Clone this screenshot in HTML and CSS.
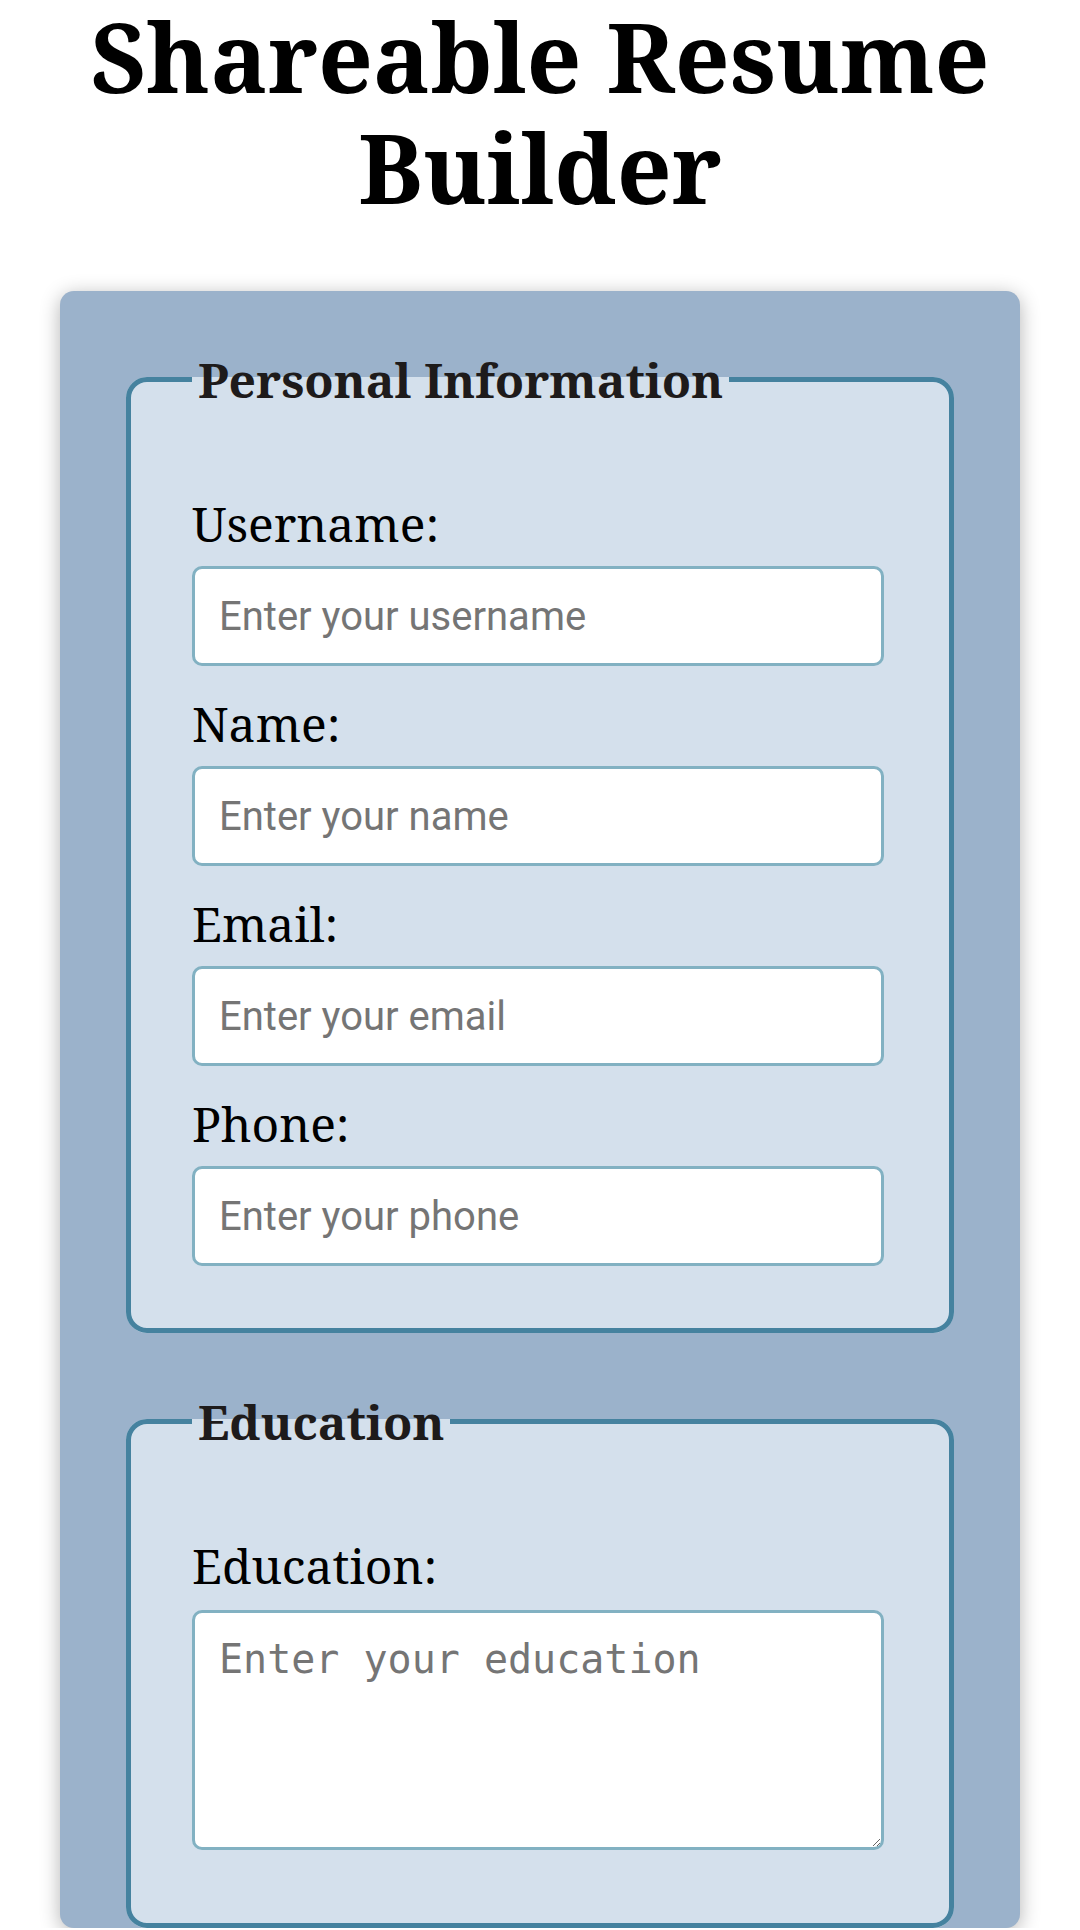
FILE: index.html
```html
<!DOCTYPE html>
<html lang="en">
<head>
<meta charset="utf-8">
<title>Shareable Resume Builder</title>
<link rel="stylesheet" href="styles.css">
</head>
<body>
<h1 class="page-title">Shareable Resume Builder</h1>
<form class="card">
  <fieldset class="section">
    <legend class="section-title">Personal Information</legend>
    <div class="field">
      <label class="field-label" for="username">Username:</label>
      <input class="field-input" type="text" id="username" placeholder="Enter your username">
    </div>
    <div class="field">
      <label class="field-label" for="name">Name:</label>
      <input class="field-input" type="text" id="name" placeholder="Enter your name">
    </div>
    <div class="field">
      <label class="field-label" for="email">Email:</label>
      <input class="field-input" type="email" id="email" placeholder="Enter your email">
    </div>
    <div class="field">
      <label class="field-label" for="phone">Phone:</label>
      <input class="field-input" type="tel" id="phone" placeholder="Enter your phone">
    </div>
  </fieldset>
  <fieldset class="section">
    <legend class="section-title">Education</legend>
    <div class="field">
      <label class="field-label" for="education">Education:</label>
      <textarea class="field-textarea" id="education" placeholder="Enter your education"></textarea>
    </div>
  </fieldset>
</form>
</body>
</html>
```
FILE: styles.css
```css
html, body {
  margin: 0;
  padding: 0;
  background: #ffffff;
}

body {
  font-family: "Noto Serif", "DejaVu Serif", serif;
  color: #000000;
}

.page-title {
  margin: 0 0 69px;
  font-size: 96px;
  font-weight: bold;
  line-height: 111px;
  text-align: center;
  color: #000000;
}

.card {
  margin: 0 60px;
  padding: 56px 66px 0;
  background: #9bb2cb;
  border-radius: 14px;
  box-shadow: 0 4px 20px rgba(0, 0, 0, 0.3);
  display: flex;
  flex-direction: column;
  gap: 56px;
}

.section {
  margin: 0;
  padding: 79px 65px 62px 61px;
  border: 5px solid #45829f;
  border-radius: 21px;
  background: #d4e0ec;
  display: flex;
  flex-direction: column;
  gap: 25px;
  min-width: 0;
}

.section-title {
  padding: 0 6px;
  font-size: 48px;
  font-weight: bold;
  color: #1e1b1b;
}

.field {
  display: flex;
  flex-direction: column;
}

.field-label {
  font-size: 48px;
  margin-bottom: 10px;
  color: #000000;
}

.field-input,
.field-textarea {
  box-sizing: border-box;
  width: 100%;
  margin: 0;
  padding: 23px 24px;
  border: 3px solid #82b1c2;
  border-radius: 10px;
  background: #ffffff;
  color: #000000;
}

.field-input {
  height: 100px;
  font-family: Roboto, "Noto Sans", sans-serif;
  font-size: 40px;
}

.field-textarea {
  display: block;
  height: 240px;
  margin: 2px 0 11px;
  font-family: "DejaVu Sans Mono", monospace;
  font-size: 40px;
  resize: vertical;
}

.field-input::placeholder,
.field-textarea::placeholder {
  color: #757575;
}
```
